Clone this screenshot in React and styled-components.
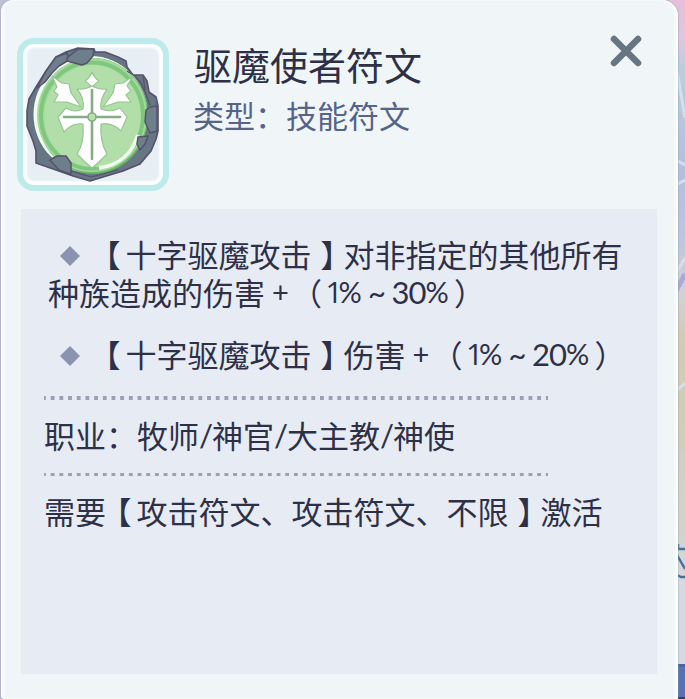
import React from "react";
import styled, { createGlobalStyle } from "styled-components";

const GlobalStyle = createGlobalStyle`
  * {
    box-sizing: border-box;
  }

  body {
    margin: 0;
    overflow: hidden;
    font-family: "Noto Sans CJK SC", sans-serif;
  }
`;

const Page = styled.main`
  position: relative;
  width: 685px;
  height: 699px;
  padding-left: 1px;
  overflow: hidden;
  background: #bfc0d2;
`;

const Scenery = styled.svg`
  position: absolute;
  top: 0;
  right: 0;
`;

const Card = styled.section`
  position: relative;
  width: 677px;
  height: 699px;
  padding: 38px 21px 25px 16px;
  display: flex;
  flex-direction: column;
  background: #f0f6f8;
  border-radius: 12px 16px 0 4px;
  box-shadow: inset -3px 0 2px #fbfdff, inset 3px 0 2px #f9fbff, 0 0 2px #8998b8;
`;

const Header = styled.header`
  display: flex;
  height: 171px;
`;

const IconFrame = styled.div`
  width: 152px;
  height: 153px;
  border: 6px solid #bdebeb;
  border-radius: 17px;
  background: #e7eff5;
  box-shadow: inset 0 0 2px 4px #fbfeff;
`;

const Heading = styled.div`
  flex: 1;
  padding-left: 25px;
`;

const Title = styled.h1`
  margin: -1px 0 0;
  font-size: 38px;
  line-height: 54px;
  font-weight: 400;
  color: #2e3047;
  white-space: nowrap;
`;

const Subtitle = styled.p`
  margin: 3px 0 0 -1px;
  font-size: 31px;
  line-height: 42px;
  color: #56638a;
  white-space: nowrap;
`;

const Close = styled.button`
  width: 34px;
  height: 34px;
  margin: -4px 14px 0 0;
  padding: 0;
  border: none;
  background: none;
  cursor: pointer;
`;

const Body = styled.div`
  flex: 1;
  margin-left: 4px;
  padding: 26px 0 0 23px;
  background: #e7ebf4;
  color: #2e3047;
`;

const Effect = styled.div`
  margin-bottom: ${props => props.gap || "0"};
`;

const Line = styled.p`
  display: flex;
  align-items: center;
  height: 38px;
  margin: 0;
  padding-left: ${props => props.indent || "0"};
  font-size: 31px;
  line-height: 38px;
  white-space: pre;
`;

const Diamond = styled.svg`
  width: 20px;
  height: 20px;
  margin: 3px 15px 0 0;
`;

/* half-width punctuation, spaced by its own padding */
const Bracket = styled.span`
  font-feature-settings: "halt";
  padding: ${props => props.pad || "0"};
`;

const Latin = styled.span`
  font-family: ${props => props.font || "Lato"}, sans-serif;
  font-size: ${props => props.size || "31px"};
  letter-spacing: ${props => props.spacing || "0"};
  width: ${props => props.width || "auto"};
  text-align: ${props => props.align || "left"};
`;

const Dots = styled.div`
  width: 504px;
  height: ${props => props.size};
  margin: ${props => props.margin};
  background: linear-gradient(90deg, #9ba1b5 3.4px, transparent 3.4px) 6.7px 0 / 8.7px 100% repeat-x;
`;

const Open = () => <Bracket pad="0 5px 0 10px">【</Bracket>;
const Shut = () => <Bracket pad="0 7.5px 0 9px">】</Bracket>;

const Range = ({ max }) => (
    <>
        <Latin size="29px" width="31px" align="center">+</Latin>
        <Bracket pad="0 3.5px 0 10.5px">（</Bracket>
        <Latin font="Open Sans" size="30px" width="13px">1</Latin>
        <Latin size="29px" width="24px">%</Latin>
        <Latin width="29px" align="center">~</Latin>
        <Latin width="34px" spacing="-1px">{max}</Latin>
        <Latin size="29px" width="28.5px">%</Latin>
        <Bracket>）</Bracket>
    </>
);

const Bullet = () => (
    <Diamond viewBox="0 0 20 20">
        <path d="M10 0 20 10 10 20 0 10Z" fill="#8a94b0" />
    </Diamond>
);

const RuneIcon = () => (
    <svg viewBox="0 0 140 141" width="140" height="141">
        <path
            d="M33 13 43 8 55 4 71 5 72 8 82 8 95 13 103 17 104 23 110 31 120 31 124 37 126 48 133 53 135 62 135 87 133 95 128 107 117 120 100 127 80 133 67 137 50 132 33 126 13 119 13 107 10 97 4 82 4 67 6 55 13 43 23 27Z"
            fill="#667682" stroke="#57516b" strokeWidth="1.6" strokeLinejoin="round"
        />
        <ellipse cx="67.500" cy="70.500" rx="57" ry="58.500" fill="#f2faf1" />
        <ellipse cx="70" cy="72" rx="55" ry="58" fill="#68bb66" />
        <ellipse cx="69" cy="71" rx="55" ry="57" fill="#a3d99d" />
        <ellipse cx="69" cy="71.500" rx="51" ry="53" fill="none" stroke="#7fc77d" strokeWidth="4" />
        <ellipse cx="69.500" cy="72" rx="48" ry="51" fill="#b2dfa9" />
        <path d="M76 124C98 121 110 107 115 91" fill="none" stroke="#effbeb" strokeWidth="4" />
        <g fill="#fff" stroke="#97c593" strokeWidth="1.2" strokeLinejoin="round">
            <path d="M69 28C71 33 73 35 76 37 73 39 71 41 69 43 67 41 65 39 62 37 65 35 67 33 69 28Z" />
            <path d="M29 32 39 39 46 40 48 49 58 63 44 58 31 58 35 51 31 47 34 43Z" />
            <path d="M110 32 100 39 92 40 90 49 80 63 95 58 108 58 103 51 108 47 104 42Z" />
            <path d="M54 45C60 46 65 44 69 42C73 44 78 46 84 45C79 52 77 59 78 65C85 68 91 67 97 64L104 73 98 87C91 80 84 79 78 80C77 92 80 103 84 110L76 118 69 124 61 117 54 110C59 103 61 92 60 80C54 79 47 81 41 88L35 73 43 64C48 67 54 68 60 65C61 59 60 52 54 45Z" />
        </g>
        <g stroke="#86ac84" strokeWidth="2.6" strokeLinecap="round" fill="none">
            <path d="M69 46V115M41 73H97" />
            <circle cx="69" cy="73" r="4" fill="#b5e2aa" strokeWidth="1.6" />
        </g>
        <g fill="#6d7f8b" stroke="#57516b" strokeWidth="1.5" strokeLinejoin="round">
            <path d="M33 13 44 9 46 16 36 22 29 29 22 38 14 44 23 27Z" />
            <path d="M44 14 55 5 71 5 70 12 64 19 59 21 44 17Z" />
            <path d="M123 66 127 63 134 62 134 87 127 89 122 78Z" />
            <path d="M115 93 125 92 122 100 117 106 114 100Z" />
            <path d="M27 116 34 112 43 112 48 119 48 130 36 126Z" />
        </g>
        <path d="M104 27 112 32 118 39 123 50 127 61M120 32 122 46M48 127 68 133 95 126" fill="none" stroke="#57516b" strokeWidth="1.2" />
    </svg>
);

const Background = () => (
    <Scenery width="16" height="699" viewBox="0 0 16 699">
        <defs>
            <linearGradient id="sky" x1="0" y1="0" x2="0" y2="1">
                <stop offset="0" stopColor="#e6bfda" />
                <stop offset=".06" stopColor="#dcc8df" />
                <stop offset=".1" stopColor="#b9cde0" />
                <stop offset=".25" stopColor="#b5bfdc" />
                <stop offset=".34" stopColor="#bcc6df" />
                <stop offset=".42" stopColor="#d4d1d5" />
                <stop offset=".48" stopColor="#d3cbb5" />
                <stop offset=".57" stopColor="#d1cdb4" />
                <stop offset=".75" stopColor="#d2d3c9" />
                <stop offset=".84" stopColor="#d7d9e0" />
                <stop offset="1" stopColor="#d7d9e0" />
            </linearGradient>
        </defs>
        <rect width="16" height="699" fill="url(#sky)" />
        <path d="M7 65 16 118M7 160 16 165M7 185 16 180M7 273 16 258M7 391 16 383" stroke="#d7dfeb" strokeWidth="3" />
        <path d="M7 291 16 274" stroke="#a9a9d5" strokeWidth="5" />
        <rect y="665" width="16" height="34" fill="#5971b3" />
        <rect y="664" width="16" height="3" fill="#4d659f" />
        <rect y="697" width="16" height="2" fill="#353b68" />
        <path d="M9 544V549H16M8 555 16 569M8 575 12 577H16" fill="none" stroke="#446e9f" strokeWidth="2.5" />
    </Scenery>
);

const App = () => (
    <>
        <GlobalStyle />
        <Page>
            <Background />
            <Card>
                <Header>
                    <IconFrame>
                        <RuneIcon />
                    </IconFrame>
                    <Heading>
                        <Title>驱魔使者符文</Title>
                        <Subtitle>类型：技能符文</Subtitle>
                    </Heading>
                    <Close aria-label="关闭">
                        <svg width="34" height="34" viewBox="0 0 34 34">
                            <path d="M5 5 29 29M29 5 5 29" stroke="#687582" strokeWidth="6.5" strokeLinecap="round" />
                        </svg>
                    </Close>
                </Header>
                <Body>
                    <Effect gap="24px">
                        <Line indent="16px">
                            <Bullet />
                            <Open />十字驱魔攻击<Shut />对非指定的其他所有
                        </Line>
                        <Line indent="4px">
                            种族造成的伤害<Range max="30" />
                        </Line>
                    </Effect>
                    <Effect>
                        <Line indent="16px">
                            <Bullet />
                            <Open />十字驱魔攻击<Shut />伤害<Range max="20" />
                        </Line>
                    </Effect>
                    <Dots size="4px" margin="23px 0 16px" />
                    <Line>
                        职业：牧师<Latin spacing="-1px">/</Latin>神官<Latin spacing="-1px">/</Latin>大主教<Latin spacing="-1px">/</Latin>神使
                    </Line>
                    <Dots size="3px" margin="19px 0 16px" />
                    <Line>
                        需要<Open />攻击符文、攻击符文、不限<Shut />激活
                    </Line>
                </Body>
            </Card>
        </Page>
    </>
);

export default App;
